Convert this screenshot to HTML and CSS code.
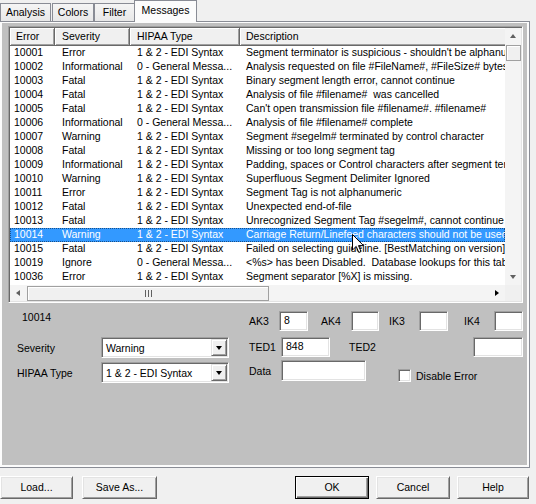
FILE: index.html
```html
<!DOCTYPE html>
<html lang="en">
    <head>
        <meta charset="utf-8" />
        <title>Messages</title>
        <link rel="stylesheet" href="styles.css">
    </head>

    <body>
        <div class="tabs">
            <div class="tab tab-analysis">Analysis</div>
            <div class="tab tab-colors">Colors</div>
            <div class="tab tab-filter">Filter</div>
            <div class="tab tab-messages">Messages</div>
        </div>

        <div class="panel">
            <div class="page">
                <div class="listbox">
                    <div class="list-view">
                        <div class="row head">
                            <div class="cell c-err">Error</div>
                            <div class="cell c-sev">Severity</div>
                            <div class="cell c-type">HIPAA Type</div>
                            <div class="cell c-desc">Description</div>
                        </div>
                        <div class="row"><div class="cell c-err">10001</div><div class="cell c-sev">Error</div><div class="cell c-type">1 &amp; 2 - EDI Syntax</div><div class="cell c-desc">Segment terminator is suspicious - shouldn't be alphanumeric</div></div>
                        <div class="row"><div class="cell c-err">10002</div><div class="cell c-sev">Informational</div><div class="cell c-type">0 - General Messa...</div><div class="cell c-desc">Analysis requested on file #FileName#, #FileSize# bytes</div></div>
                        <div class="row"><div class="cell c-err">10003</div><div class="cell c-sev">Fatal</div><div class="cell c-type">1 &amp; 2 - EDI Syntax</div><div class="cell c-desc">Binary segment length error, cannot continue</div></div>
                        <div class="row"><div class="cell c-err">10004</div><div class="cell c-sev">Fatal</div><div class="cell c-type">1 &amp; 2 - EDI Syntax</div><div class="cell c-desc">Analysis of file #filename#  was cancelled</div></div>
                        <div class="row"><div class="cell c-err">10005</div><div class="cell c-sev">Fatal</div><div class="cell c-type">1 &amp; 2 - EDI Syntax</div><div class="cell c-desc">Can't open transmission file #filename#. #filename#</div></div>
                        <div class="row"><div class="cell c-err">10006</div><div class="cell c-sev">Informational</div><div class="cell c-type">0 - General Messa...</div><div class="cell c-desc">Analysis of file #filename# complete</div></div>
                        <div class="row"><div class="cell c-err">10007</div><div class="cell c-sev">Warning</div><div class="cell c-type">1 &amp; 2 - EDI Syntax</div><div class="cell c-desc">Segment #segelm# terminated by control character</div></div>
                        <div class="row"><div class="cell c-err">10008</div><div class="cell c-sev">Fatal</div><div class="cell c-type">1 &amp; 2 - EDI Syntax</div><div class="cell c-desc">Missing or too long segment tag</div></div>
                        <div class="row"><div class="cell c-err">10009</div><div class="cell c-sev">Informational</div><div class="cell c-type">1 &amp; 2 - EDI Syntax</div><div class="cell c-desc">Padding, spaces or Control characters after segment terminator</div></div>
                        <div class="row"><div class="cell c-err">10010</div><div class="cell c-sev">Warning</div><div class="cell c-type">1 &amp; 2 - EDI Syntax</div><div class="cell c-desc">Superfluous Segment Delimiter Ignored</div></div>
                        <div class="row"><div class="cell c-err">10011</div><div class="cell c-sev">Error</div><div class="cell c-type">1 &amp; 2 - EDI Syntax</div><div class="cell c-desc">Segment Tag is not alphanumeric</div></div>
                        <div class="row"><div class="cell c-err">10012</div><div class="cell c-sev">Fatal</div><div class="cell c-type">1 &amp; 2 - EDI Syntax</div><div class="cell c-desc">Unexpected end-of-file</div></div>
                        <div class="row"><div class="cell c-err">10013</div><div class="cell c-sev">Fatal</div><div class="cell c-type">1 &amp; 2 - EDI Syntax</div><div class="cell c-desc">Unrecognized Segment Tag #segelm#, cannot continue</div></div>
                        <div class="row selected"><div class="cell c-err">10014</div><div class="cell c-sev">Warning</div><div class="cell c-type">1 &amp; 2 - EDI Syntax</div><div class="cell c-desc">Carriage Return/Linefeed characters should not be used</div></div>
                        <div class="row"><div class="cell c-err">10015</div><div class="cell c-sev">Fatal</div><div class="cell c-type">1 &amp; 2 - EDI Syntax</div><div class="cell c-desc">Failed on selecting guideline. [BestMatching on version]</div></div>
                        <div class="row"><div class="cell c-err">10019</div><div class="cell c-sev">Ignore</div><div class="cell c-type">0 - General Messa...</div><div class="cell c-desc">&lt;%s&gt; has been Disabled.  Database lookups for this table</div></div>
                        <div class="row"><div class="cell c-err">10036</div><div class="cell c-sev">Error</div><div class="cell c-type">1 &amp; 2 - EDI Syntax</div><div class="cell c-desc">Segment separator [%X] is missing.</div></div>
                    </div>

                    <div class="vscroll">
                        <div class="sb-btn"><span class="arr arr-up"></span></div>
                        <div class="sb-track"><div class="thumb vthumb"></div></div>
                        <div class="sb-btn"><span class="arr arr-down"></span></div>
                    </div>
                    <div class="hscroll">
                        <div class="sb-btn"><span class="arr arr-left"></span></div>
                        <div class="sb-track"><div class="thumb hthumb"><span class="grip"></span></div></div>
                        <div class="sb-btn"><span class="arr arr-right"></span></div>
                    </div>
                    <div class="corner"></div>
                </div>

                <div class="detail">
                    <div class="detail-left">
                        <div class="msg-id">10014</div>
                        <div class="field field-sev">
                            <span class="field-label">Severity</span>
                            <div class="combo"><span class="combo-text">Warning</span><span class="combo-btn"><span class="arr arr-down dark"></span></span></div>
                        </div>
                        <div class="field field-type">
                            <span class="field-label">HIPAA Type</span>
                            <div class="combo"><span class="combo-text">1 &amp; 2 - EDI Syntax</span><span class="combo-btn"><span class="arr arr-down dark"></span></span></div>
                        </div>
                    </div>

                    <div class="detail-right">
                        <div class="prop-row row-ak">
                            <span class="key">AK3</span><div class="box w29">8</div>
                            <span class="key k-ak4">AK4</span><div class="box w28"></div>
                            <span class="key k-ik3">IK3</span><div class="box w29"></div>
                            <span class="key k-ik4">IK4</span><div class="box w29"></div>
                        </div>
                        <div class="prop-row row-ted">
                            <span class="key wide">TED1</span><div class="box w49">848</div>
                            <span class="key k-ted2">TED2</span><div class="box w50"></div>
                        </div>
                        <div class="prop-row row-data">
                            <span class="key wide">Data</span><div class="box w85"></div>
                            <label class="check"><span class="check-box"></span>Disable Error</label>
                        </div>
                    </div>
                </div>
            </div>
        </div>

        <div class="buttons">
            <div class="btn b-load">Load...</div>
            <div class="btn b-save">Save As...</div>
            <div class="btn b-ok default">OK</div>
            <div class="btn b-cancel">Cancel</div>
            <div class="btn b-help">Help</div>
        </div>

        <svg class="cursor" width="13" height="20" viewBox="0 0 13 20">
            <path d="M0.5 0.5 L0.5 16 L4.2 12.4 L6.8 18.5 L9 17.5 L6.5 11.6 L11.5 11.6 Z" fill="#fff" stroke="#000" stroke-width="1" stroke-linejoin="miter"/>
        </svg>
    </body>
</html>
```

FILE: styles.css
```css
html, body {
    margin: 0;
    padding: 0;
    width: 536px;
    height: 504px;
    overflow: hidden;
    background: #f0f0f0;
}
body {
    font-family: "Liberation Sans", Arial, sans-serif;
    font-size: 10.5px;
    color: #000;
    position: relative;
}

/* tabs */
.tabs {
    display: flex;
    align-items: flex-end;
    height: 21px;
    position: relative;
    z-index: 1;
}
.tab {
    box-sizing: border-box;
    height: 18px;
    line-height: 17px;
    text-align: center;
    border: 1px solid #898c95;
    border-bottom: none;
    background: linear-gradient(#f5f5f5, #e8e8e8);
}
.tab-analysis { width: 51px; }
.tab-colors { width: 42px; margin-left: 1px; }
.tab-filter { width: 41px; }
.tab-messages {
    width: 63px;
    height: 22px;
    line-height: 19px;
    margin-left: -1px;
    margin-bottom: -1px;
    background: #fcfcfc;
}

/* tab page */
.panel {
    box-sizing: border-box;
    width: 531px;
    height: 447px;
    margin-left: -1px;
    padding: 1px 2px 2px 2px;
    border: 1px solid #898c95;
    background: #fcfcfc;
}
.page {
    box-sizing: border-box;
    height: 100%;
    padding: 3px 0 0 6px;
    background: #c0c0c0;
}

/* list view */
.listbox {
    box-sizing: border-box;
    width: 515px;
    height: 277px;
    padding: 1px;
    border: 1px solid;
    border-color: #a0a0a0 #fff #fff #a0a0a0;
    box-shadow: inset 1px 1px 0 #696969, inset -1px -1px 0 #e3e3e3;
    display: grid;
    grid-template-columns: 495px 16px;
    grid-template-rows: 257px 16px;
}
.list-view {
    overflow: hidden;
    background: #fff;
}
.row {
    display: flex;
    height: 14px;
    line-height: 12px;
    white-space: pre;
}
.cell {
    flex: none;
    box-sizing: border-box;
    padding-left: 7px;
    overflow: hidden;
}
.c-err { width: 45px; padding-left: 4px; }
.c-sev { width: 75px; }
.c-type { width: 110px; }
.c-desc { width: 420px; padding-left: 6px; }
.row.head {
    height: 18px;
    line-height: 17px;
}
.head .cell {
    background: #f0f0f0;
    border-right: 1px solid #696969;
    border-bottom: 1px solid #696969;
    box-shadow: inset 1px 1px 0 #fff, inset -1px -1px 0 #a0a0a0;
}
.head .c-err { padding-left: 6px; }
.row.selected {
    background: #3399ff;
    color: #fff;
    outline: 1px dotted #1b4f86;
    outline-offset: -1px;
}

/* scrollbars */
.vscroll, .hscroll {
    display: flex;
    background: #f4f4f4;
}
.vscroll { flex-direction: column; }
.sb-btn {
    flex: none;
    width: 16px;
    height: 16px;
    display: flex;
    align-items: center;
    justify-content: center;
}
.sb-track {
    flex: 1;
    display: flex;
}
.vscroll .sb-track { flex-direction: column; }
.thumb {
    box-sizing: border-box;
    background: #f0f0f0;
    border: 1px solid #a0a0a0;
    box-shadow: inset 1px 1px 0 #fff;
}
.vthumb {
    width: 15px;
    height: 16px;
    margin: 1px 0 0 1px;
}
.hthumb {
    width: 242px;
    height: 15px;
    margin: 1px 0 0 1px;
    display: flex;
    align-items: center;
    justify-content: center;
}
.grip {
    width: 7px;
    height: 7px;
    background: repeating-linear-gradient(90deg, #606060 0 1px, transparent 1px 3px);
}
.corner { background: #f0f0f0; }
.arr {
    width: 0;
    height: 0;
    border: 3.5px solid transparent;
}
.arr-up { border-bottom: 4px solid #606060; border-top-width: 0; }
.arr-down { border-top: 4px solid #606060; border-bottom-width: 0; }
.arr-left { border-right: 4px solid #606060; border-left-width: 0; }
.arr-right { border-left: 4px solid #000; border-right-width: 0; }
.arr.dark { border-top-color: #000; }

/* detail fields */
.detail {
    display: flex;
    padding-left: 9px;
}
.detail-left { width: 212px; }
.msg-id {
    margin-top: 7px;
    padding-left: 5px;
    height: 14px;
    line-height: 14px;
}
.field {
    display: flex;
    align-items: center;
    height: 21px;
}
.field-sev { margin-top: 13px; }
.field-type { margin-top: 4px; }
.field-label { width: 84px; }

.combo, .box, .check-box {
    box-sizing: border-box;
    background: #fff;
    border: 1px solid;
    border-color: #a0a0a0 #fff #fff #a0a0a0;
    box-shadow: inset 1px 1px 0 #696969, inset -1px -1px 0 #e3e3e3;
}
.combo {
    width: 128px;
    height: 21px;
    padding: 1px;
    display: flex;
    align-items: center;
}
.combo-text {
    flex: 1;
    padding-left: 3px;
}
.combo-btn {
    box-sizing: border-box;
    width: 16px;
    height: 17px;
    display: flex;
    align-items: center;
    justify-content: center;
    background: #f0f0f0;
    border: 1px solid;
    border-color: #e3e3e3 #696969 #696969 #e3e3e3;
    box-shadow: inset 1px 1px 0 #fff, inset -1px -1px 0 #a0a0a0;
}

.detail-right { margin-left: 20px; }
.prop-row {
    display: flex;
    align-items: center;
    height: 20px;
}
.row-ak { margin-top: 8px; }
.row-ted { margin-top: 6px; }
.row-data { margin-top: 3px; height: 21px; }
.key { width: 30px; }
.key.wide { width: 32px; }
.k-ak4 { margin-left: 13px; }
.k-ik3 { margin-left: 10px; }
.k-ik4 { margin-left: 16px; }
.k-ted2 { margin-left: 19px; width: 124px; }
.box {
    height: 20px;
    padding-left: 4px;
    line-height: 16px;
}
.row-data .box { height: 21px; }
.w28 { width: 28px; }
.w29 { width: 29px; }
.w49 { width: 49px; }
.w50 { width: 50px; }
.w85 { width: 85px; }
.check {
    display: flex;
    align-items: center;
    align-self: flex-start;
    margin: 9px 0 0 32px;
    height: 13px;
}
.check-box {
    width: 13px;
    height: 13px;
    margin-right: 5px;
}

/* dialog buttons */
.buttons {
    display: flex;
    margin-top: 8px;
    padding-right: 7px;
}
.btn {
    box-sizing: border-box;
    height: 23px;
    line-height: 20px;
    text-align: center;
    background: #f0f0f0;
    border: 1px solid;
    border-color: #fff #696969 #696969 #fff;
    box-shadow: inset 1px 1px 0 #e3e3e3, inset -1px -1px 0 #a0a0a0;
}
.btn.default {
    border-color: #000;
    box-shadow: inset 1px 1px 0 #fff, inset -1px -1px 0 #696969, inset -2px -2px 0 #a0a0a0;
}
.b-load { width: 73px; }
.b-save { width: 75px; margin-left: 9px; }
.b-ok { width: 74px; margin-left: auto; }
.b-cancel { width: 74px; margin-left: 7px; }
.b-help { width: 72px; margin-left: 7px; }

.cursor {
    position: absolute;
    left: 352px;
    top: 234px;
}
```
